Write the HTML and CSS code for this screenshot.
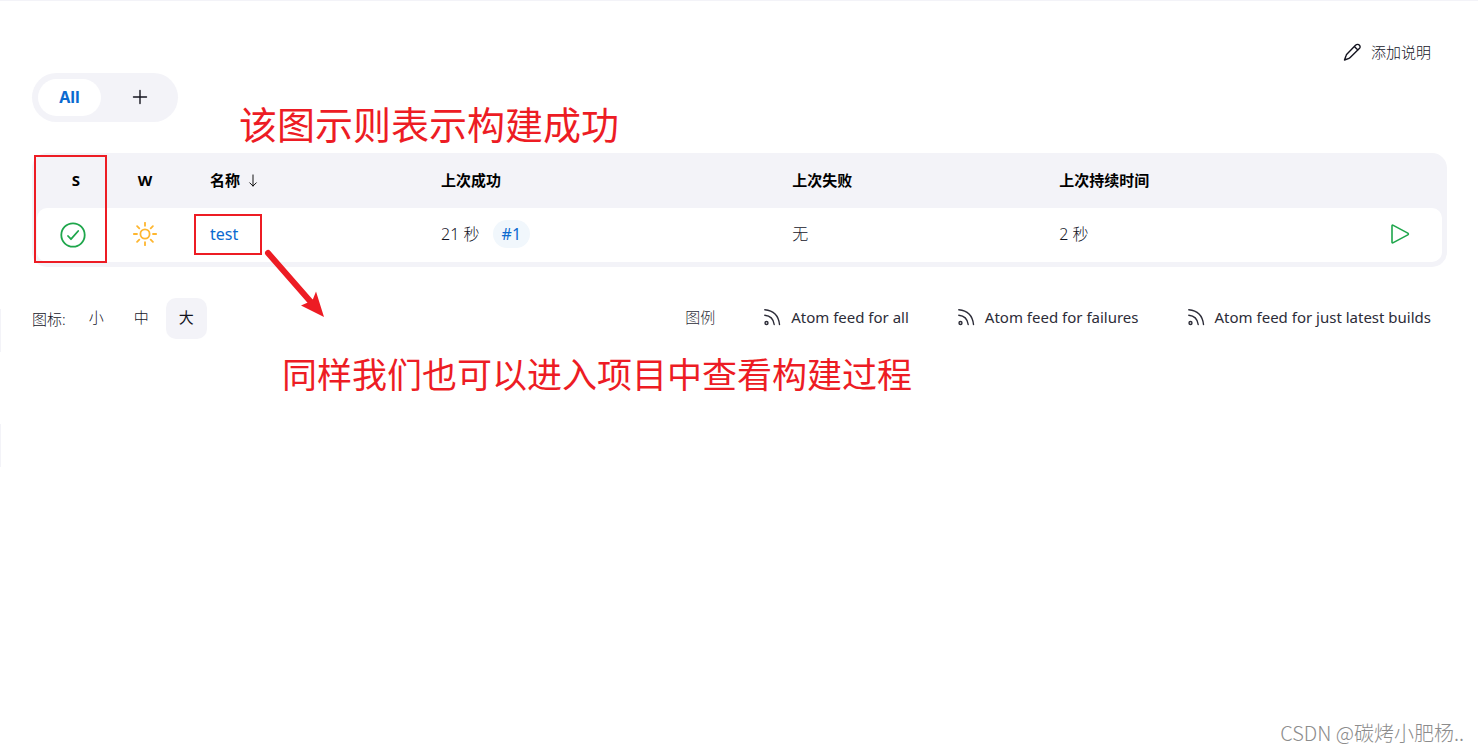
FILE: index.html
```html
<!DOCTYPE html>
<html lang="zh-CN">
<head>
    <meta charset="UTF-8">
    <meta name="viewport" content="width=device-width, initial-scale=1.0">
    <title>Jenkins</title>
    <link rel="stylesheet" href="styles.css">
</head>
<body>
    <main class="main-panel">
        <div class="top-actions">
            <a href="#" class="icon-link light">
                <svg class="icon" viewBox="0 0 18 18"><path d="M12.500 2.300q1.600-1.500 3.200-.6t1.400 2.500q-.2.800-.8 1.400L7.200 14.600q-.5.500-1.200.7L1.500 17l1.600-4.500q.2-.7.700-1.200zM11.300 3.600l3.600 3.400" /></svg>
                <span>添加说明</span>
            </a>
        </div>

        <nav class="tab-bar">
            <a href="#" class="tab active">All</a>
            <a href="#" class="tab" aria-label="New View">
                <svg class="plus" viewBox="0 0 16 16"><path d="M8 1.500v13M1.500 8h13" /></svg>
            </a>
        </nav>

        <table class="projects">
            <colgroup>
                <col class="col-status">
                <col class="col-weather">
                <col class="col-name">
                <col class="col-success">
                <col class="col-failure">
                <col class="col-duration">
                <col class="col-run">
            </colgroup>
            <thead>
                <tr>
                    <th class="status">S</th>
                    <th class="weather">W</th>
                    <th class="name">名称 <svg class="sort" viewBox="0 0 10 14"><path d="M5 1v12M1.500 9.500L5 13l3.500-3.500" /></svg></th>
                    <th>上次成功</th>
                    <th>上次失败</th>
                    <th>上次持续时间</th>
                    <th></th>
                </tr>
            </thead>
            <tbody>
                <tr>
                    <td class="status">
                        <svg class="ball" viewBox="0 0 26 26"><circle cx="13" cy="13" r="11.700" /><path d="M8 14l3 3.200L18.200 9" /></svg>
                    </td>
                    <td class="weather">
                        <svg class="sun" viewBox="0 0 24 24"><circle cx="12" cy="12" r="4.600" /><path d="M12 .8v3M12 20.200v3M.8 12h3.200M20 12h3.200M4.100 4.100l2.200 2.200M17.700 17.700l2.200 2.200M4.100 19.900l2.200-2.200M17.700 6.300l2.200-2.200" /></svg>
                    </td>
                    <td class="name"><a href="#" class="job-link">test</a></td>
                    <td>21 秒 <a href="#" class="build-badge">#1</a></td>
                    <td>无</td>
                    <td>2 秒</td>
                    <td class="run">
                        <button type="button" class="run-button" aria-label="Build">
                            <svg viewBox="0 0 20 20"><path d="M2 2.100v15.800q0 1.400 1.300.7l14.500-7.700q1.200-.9 0-1.800L3.300 1.400Q2 .7 2 2.100z" /></svg>
                        </button>
                    </td>
                </tr>
            </tbody>
        </table>

        <div class="table-footer">
            <div class="icon-size">
                <span class="label">图标:</span>
                <a href="#" class="size">小</a>
                <a href="#" class="size">中</a>
                <a href="#" class="size selected">大</a>
            </div>
            <div class="feeds">
                <a href="#" class="icon-link light">图例</a>
                <a href="#" class="icon-link">
                    <svg class="icon" viewBox="0 0 18 18"><circle cx="3.500" cy="15" r="1.500" /><path d="M1.800 7.300Q10 8 11.200 16.500M1.800 1.800Q15 3 16.500 16.500" /></svg>
                    <span>Atom feed for all</span>
                </a>
                <a href="#" class="icon-link">
                    <svg class="icon" viewBox="0 0 18 18"><circle cx="3.500" cy="15" r="1.500" /><path d="M1.800 7.300Q10 8 11.200 16.500M1.800 1.800Q15 3 16.500 16.500" /></svg>
                    <span>Atom feed for failures</span>
                </a>
                <a href="#" class="icon-link">
                    <svg class="icon" viewBox="0 0 18 18"><circle cx="3.500" cy="15" r="1.500" /><path d="M1.800 7.300Q10 8 11.200 16.500M1.800 1.800Q15 3 16.500 16.500" /></svg>
                    <span>Atom feed for just latest builds</span>
                </a>
            </div>
        </div>
    </main>

    <!-- side panel edges -->
    <div class="edge edge-first"></div>
    <div class="edge edge-second"></div>

    <!-- annotations -->
    <div class="mark mark-status"></div>
    <div class="mark mark-name"></div>
    <svg class="arrow" viewBox="0 0 64 72"><path class="shaft" d="M5 6l42 48" /><path d="M61 70L38 58.500l8-3.500 4-3 3-7.500z" /></svg>
    <p class="note note-success">该图示则表示构建成功</p>
    <p class="note note-enter">同样我们也可以进入项目中查看构建过程</p>
    <p class="watermark">CSDN @碳烤小肥杨..</p>
</body>
</html>
```
FILE: styles.css
```css
* {
    margin: 0;
    padding: 0;
    box-sizing: border-box;
}

body {
    font-family: 'Noto Sans', 'Noto Sans CJK SC', sans-serif;
    font-size: 15px;
    line-height: 24px;
    color: #14141f;
    background: #fff;
    border-top: 1px solid #f3f3f8;
    min-height: 100vh;
    position: relative;
}

a {
    color: inherit;
    text-decoration: none;
}

svg {
    fill: none;
    stroke: currentColor;
    stroke-linecap: round;
    stroke-linejoin: round;
}

.main-panel {
    padding: 32px 31px 32px 32px;
}

.top-actions {
    display: flex;
    justify-content: flex-end;
    padding: 7px 16px 9px;
}

.icon-link {
    display: flex;
    align-items: center;
    gap: 10px;
}

.icon-link.light {
    font-weight: 300;
}

.icon {
    width: 18px;
    height: 18px;
    stroke-width: 1.4;
}

/* views */
.tab-bar {
    display: inline-flex;
    padding: 6px;
    margin-bottom: 31px;
    border-radius: 25px;
    background: #f3f3f8;
    vertical-align: top;
}

.tab {
    display: flex;
    align-items: center;
    justify-content: center;
    width: 63px;
    height: 37px;
    padding-bottom: 2px;
    border-radius: 20px;
    font-size: 16px;
    font-weight: 700;
}

.tab + .tab {
    width: 71px;
    padding-left: 6px;
}

.tab.active {
    background: #fff;
    color: #0b6ad0;
}

.plus {
    width: 16px;
    height: 16px;
    stroke-width: 1.4;
}

/* project list */
.projects {
    width: 100%;
    table-layout: fixed;
    border-collapse: separate;
    border-spacing: 0;
    border: 5px solid #f3f3f8;
    border-radius: 15px;
    background: #f3f3f8;
}

.col-status,
.col-weather {
    width: 72px;
}

.col-name {
    width: 244px;
}

.col-success {
    width: 25%;
}

.col-failure {
    width: 19%;
}

.projects th,
.projects td {
    padding: 0 16px;
    text-align: left;
}

.projects th {
    height: 50px;
    padding-bottom: 6px;
    font-weight: 700;
    color: #000;
}

.projects td {
    height: 54px;
    padding-bottom: 2px;
    background: #fff;
    font-size: 16px;
    font-weight: 300;
}

.projects td:first-child {
    border-radius: 10px 0 0 10px;
}

.projects td:last-child {
    border-radius: 0 10px 10px 0;
}

.projects .status,
.projects .weather {
    padding-left: 0;
    padding-right: 0;
    text-align: center;
}

.projects th.status {
    padding-left: 6px;
}

.projects td.status {
    padding-bottom: 0;
}

.projects .name {
    padding-left: 29px;
}

.projects td svg {
    display: block;
}

.sort {
    width: 10px;
    height: 13px;
    margin-left: 4px;
    vertical-align: -1px;
}

.ball {
    width: 26px;
    height: 26px;
    margin: 0 auto;
    color: #1ea64b;
    stroke-width: 1.8;
}

.sun {
    width: 24px;
    height: 24px;
    margin: 0 auto;
    color: #feb62f;
    stroke-width: 1.8;
}

.job-link {
    font-weight: 400;
    color: #0b6ad0;
}

.build-badge {
    display: inline-block;
    margin-left: 9px;
    padding: 2px 9px;
    border-radius: 14px;
    background: #f1f7fc;
    font-weight: 400;
    color: #0b6ad0;
}

.projects td.run {
    padding-right: 32px;
}

.run-button {
    display: block;
    margin-left: auto;
    border: none;
    background: none;
    color: #1ea64b;
    cursor: pointer;
}

.run-button svg {
    width: 20px;
    height: 20px;
    stroke-width: 1.6;
}

/* icon sizes and feeds */
.table-footer {
    display: flex;
    justify-content: space-between;
    align-items: center;
    padding: 31px 16px 0 0;
}

.icon-size {
    display: flex;
    align-items: center;
    gap: 4px;
    font-weight: 300;
}

.icon-size .label {
    margin-right: 6px;
}

.size {
    width: 41px;
    height: 41px;
    line-height: 38px;
    border-radius: 10px;
    text-align: center;
}

.size.selected {
    background: #f3f3f8;
    font-weight: 400;
}

.feeds {
    display: flex;
    gap: 48px;
    padding-bottom: 3px;
    color: #2c2c38;
}

/* side panel edges */
.edge {
    position: absolute;
    left: 0;
    width: 1px;
    height: 43px;
    background: #f3f3f8;
}

.edge-first {
    top: 308px;
}

.edge-second {
    top: 423px;
}

/* annotations */
.mark {
    position: absolute;
    border: 2px solid #ed1c24;
}

.mark-status {
    left: 34px;
    top: 154px;
    width: 73px;
    height: 108px;
}

.mark-name {
    left: 194px;
    top: 213px;
    width: 68px;
    height: 41px;
}

.arrow {
    position: absolute;
    left: 263px;
    top: 246px;
    width: 64px;
    height: 72px;
    fill: #ed1c24;
    stroke: none;
}

.arrow .shaft {
    stroke: #ed1c24;
    stroke-width: 6;
}

.note {
    position: absolute;
    color: #ed1c24;
    white-space: nowrap;
}

.note-success {
    left: 239px;
    top: 99px;
    font-size: 38px;
    line-height: 48px;
}

.note-enter {
    left: 282px;
    top: 350px;
    font-size: 35px;
    line-height: 48px;
}

.watermark {
    position: absolute;
    right: 14px;
    bottom: 7px;
    font-family: 'Noto Sans CJK SC', sans-serif;
    font-size: 20px;
    font-weight: 300;
    color: #8c8c8c;
}
```
